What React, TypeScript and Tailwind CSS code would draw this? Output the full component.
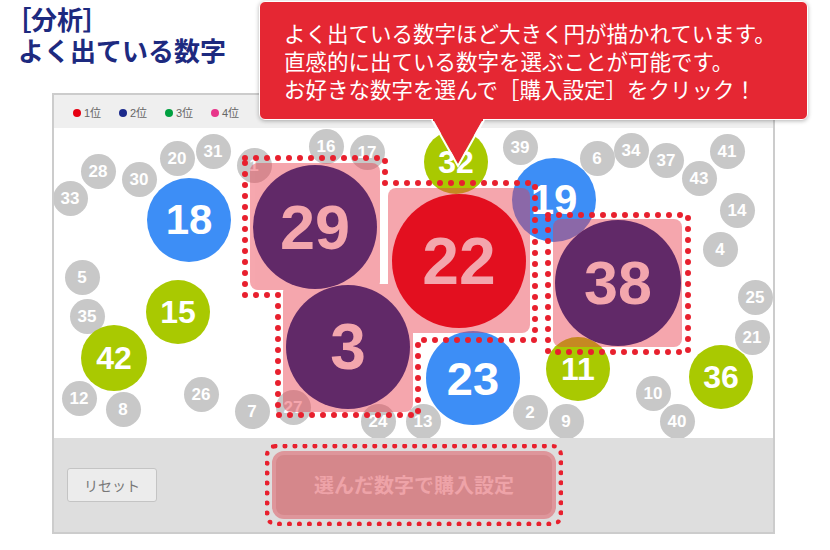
import React from "react";

// canvas origin in page coordinates
const OX = 54;
const OY = 128;

interface Ball {
  n: string;
  x: number;
  y: number;
  r: number;
  cls: string;
}

const GRAY = "bg-[#c8c8c8] text-white text-[17px]";
const GREEN = "bg-[#a9c901] text-white text-[32px]";
const BLUE = "bg-[#3d8ef6] text-white";
const PURPLE = "bg-[#612968] text-[#f3a6ad]";

const BACK: Ball[] = [
  { n: "28", x: 98, y: 171, r: 17.5, cls: GRAY },
  { n: "33", x: 70, y: 198, r: 17.5, cls: GRAY },
  { n: "30", x: 139, y: 179, r: 17.5, cls: GRAY },
  { n: "20", x: 177, y: 158, r: 17.5, cls: GRAY },
  { n: "31", x: 213, y: 151, r: 17.5, cls: GRAY },
  { n: "1", x: 254, y: 165, r: 17.5, cls: GRAY },
  { n: "16", x: 326, y: 146, r: 17.5, cls: GRAY },
  { n: "17", x: 367, y: 152, r: 17.5, cls: GRAY },
  { n: "39", x: 520, y: 147, r: 17.5, cls: GRAY },
  { n: "6", x: 597, y: 158, r: 17.5, cls: GRAY },
  { n: "34", x: 631, y: 150, r: 17.5, cls: GRAY },
  { n: "37", x: 666, y: 160, r: 17.5, cls: GRAY },
  { n: "43", x: 699, y: 178, r: 17.5, cls: GRAY },
  { n: "41", x: 727, y: 151, r: 17.5, cls: GRAY },
  { n: "14", x: 737, y: 210, r: 17.5, cls: GRAY },
  { n: "4", x: 720, y: 249, r: 17.5, cls: GRAY },
  { n: "25", x: 755, y: 297, r: 17.5, cls: GRAY },
  { n: "21", x: 752, y: 337, r: 17.5, cls: GRAY },
  { n: "5", x: 82, y: 277, r: 17.5, cls: GRAY },
  { n: "35", x: 87, y: 316, r: 17.5, cls: GRAY },
  { n: "12", x: 79, y: 398, r: 17.5, cls: GRAY },
  { n: "8", x: 123, y: 409, r: 17.5, cls: GRAY },
  { n: "26", x: 201, y: 394, r: 17.5, cls: GRAY },
  { n: "7", x: 252, y: 411, r: 17.5, cls: GRAY },
  { n: "27", x: 293, y: 407, r: 17.5, cls: GRAY },
  { n: "24", x: 378, y: 421, r: 17.5, cls: GRAY },
  { n: "13", x: 423, y: 421, r: 17.5, cls: GRAY },
  { n: "2", x: 530, y: 412, r: 17.5, cls: GRAY },
  { n: "9", x: 566, y: 421, r: 17.5, cls: GRAY },
  { n: "10", x: 653, y: 393, r: 17.5, cls: GRAY },
  { n: "40", x: 677, y: 421, r: 17.5, cls: GRAY },
  { n: "18", x: 189, y: 220, r: 42, cls: `${BLUE} text-[42px]` },
  { n: "19", x: 554, y: 200, r: 42, cls: `${BLUE} text-[42px]` },
  { n: "23", x: 473, y: 378, r: 47, cls: `${BLUE} text-[47px]` },
  { n: "15", x: 178, y: 312, r: 32, cls: GREEN },
  { n: "42", x: 114, y: 358, r: 33, cls: GREEN },
  { n: "32", x: 456, y: 162, r: 32, cls: GREEN },
  { n: "11", x: 578, y: 369, r: 32, cls: GREEN },
  { n: "36", x: 721, y: 377, r: 32, cls: GREEN },
];

const PICKED: Ball[] = [
  { n: "29", x: 315, y: 227, r: 62, cls: `${PURPLE} text-[63px]` },
  { n: "3", x: 348, y: 347, r: 62, cls: `${PURPLE} text-[64px]` },
  { n: "22", x: 459, y: 261, r: 67, cls: "bg-[#e30f1f] text-[#f3a6ad] text-[66px]" },
  { n: "38", x: 618, y: 283, r: 63, cls: `${PURPLE} text-[61px]` },
];

// highlight boxes behind the picked numbers (page coords)
const BOXES = [
  { x: 250, y: 163, w: 130, h: 127 },
  { x: 388, y: 188, w: 142, h: 145 },
  { x: 283, y: 284, w: 130, h: 128 },
  { x: 553, y: 219, w: 129, h: 128 },
];

const LEGEND = [
  { label: "1位", dot: "bg-[#e60012]" },
  { label: "2位", dot: "bg-[#1b2a8c]" },
  { label: "3位", dot: "bg-[#00a040]" },
  { label: "4位", dot: "bg-[#e8358a]" },
];

function Bubble({ b }: { b: Ball }) {
  return (
    <div
      className={`absolute rounded-full flex items-center justify-center font-bold leading-none ${b.cls}`}
      style={{ left: b.x - b.r - OX, top: b.y - b.r - OY, width: b.r * 2, height: b.r * 2 }}
    >
      {b.n}
    </div>
  );
}

export default function App() {
  return (
    <div className="relative w-[830px] h-[550px] bg-white overflow-hidden font-['Liberation_Sans','Noto_Sans_CJK_JP',sans-serif]">
      {/* title */}
      <div className="h-[93px] pl-[18px] pt-[4px] text-[26px] font-bold text-[#1d2a7f] font-['Noto_Sans_CJK_JP',sans-serif]">
        <div className="leading-[30px] [font-feature-settings:'palt']">［分析］</div>
        <div className="leading-[31px]">よく出ている数字</div>
      </div>

      {/* panel */}
      <div className="ml-[52px] w-[723px] h-[441px] border-2 border-[#cccccc] flex flex-col">
        <div className="h-[33px] bg-[#efefef] flex items-center pl-[19px] pt-[3px]">
          {LEGEND.map((l) => (
            <div key={l.label} className="w-[46px] flex items-center gap-[3px]">
              <span className={`w-[8px] h-[8px] rounded-full ${l.dot}`} />
              <span className="text-[11px] text-[#666]">{l.label}</span>
            </div>
          ))}
        </div>

        <div className="relative h-[310px] bg-white overflow-hidden">
          {BACK.map((b) => (
            <Bubble key={b.n} b={b} />
          ))}
          <div className="absolute inset-0 opacity-[0.45]">
            {BOXES.map((r, i) => (
              <div
                key={i}
                className="absolute rounded-[8px] bg-[#eb3c4b]"
                style={{ left: r.x - OX, top: r.y - OY, width: r.w, height: r.h }}
              />
            ))}
          </div>
          {PICKED.map((b) => (
            <Bubble key={b.n} b={b} />
          ))}
          <svg className="absolute inset-0 pointer-events-none" width={719} height={310}>
            <path
              d="M191 30 H331 V55 H481 V212 H364 V287 H224 V167 H191 Z"
              fill="none"
              stroke="#e8202e"
              strokeWidth={6}
              strokeDasharray="0 11"
              strokeLinecap="round"
              strokeLinejoin="round"
            />
            <path
              d="M494 87 H634 V224 H494 Z"
              fill="none"
              stroke="#e8202e"
              strokeWidth={6}
              strokeDasharray="0 11"
              strokeLinecap="round"
              strokeLinejoin="round"
            />
          </svg>
        </div>

        <div className="flex-1 bg-[#dedede] flex items-center pl-[13px] font-['Noto_Sans_CJK_JP',sans-serif]">
          <button
            type="button"
            className="w-[90px] h-[34px] rounded-[3px] border border-[#c4c4c4] bg-[#ececec] text-[14px] text-[#777]"
          >
            リセット
          </button>
          <div className="ml-[108px] w-[298px] h-[82px] border-[5px] border-dotted border-[#e8202e] rounded-[10px] p-[2px]">
            <div className="w-full h-full rounded-[12px] border-4 border-[#de969b] bg-[#d5878b] flex items-center justify-center text-[20px] font-bold text-[#eea3a8]">
              選んだ数字で購入設定
            </div>
          </div>
        </div>
      </div>

      {/* callout */}
      <div className="absolute left-[259px] top-[1px] w-[549px] h-[119px] rounded-[6px] bg-[#e52733] border border-white shadow-[0_1px_4px_rgba(0,0,0,0.3)] pt-[17px] pl-[24px] text-white text-[21.5px] leading-[28px] font-['Noto_Sans_CJK_JP',sans-serif]">
        <div>よく出ている数字ほど大きく円が描かれています。</div>
        <div>直感的に出ている数字を選ぶことが可能です。</div>
        <div>お好きな数字を選んで［購入設定］をクリック！</div>
      </div>
      <svg className="absolute left-[430px] top-[117px]" width={56} height={52}>
        <polygon points="3,2 53,2 28,47" fill="#e52733" />
        <polyline points="2,3 28,49 54,3" fill="none" stroke="#fff" strokeWidth={2} />
        <rect x={3} y={0} width={50} height={4} fill="#e52733" />
      </svg>
    </div>
  );
}
